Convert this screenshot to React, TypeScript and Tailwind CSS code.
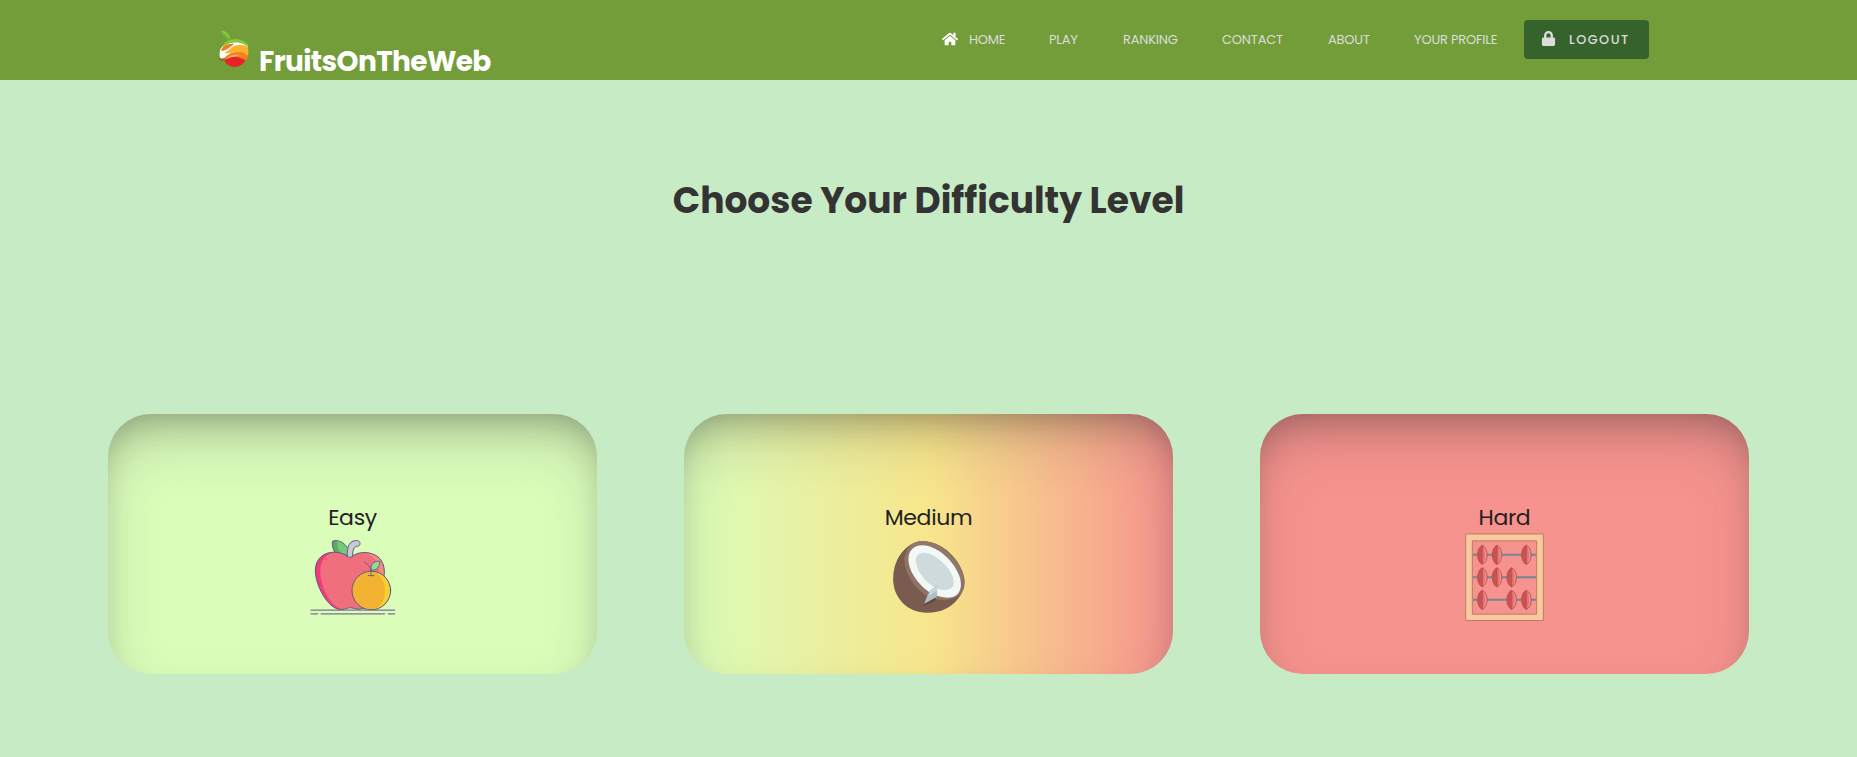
import React from 'react';
import { FaHome, FaLock } from 'react-icons/fa';

const FONT = 'font-[Poppins,Inter,sans-serif]';
const CARD =
  'flex h-[260px] w-[489px] flex-col items-center rounded-[43px] shadow-[inset_0_30px_60px_-12px_rgba(50,50,50,0.25),inset_0_18px_36px_-18px_rgba(0,0,0,0.3)]';

function FruitLogo() {
  return (
    <svg className="mt-[29px] h-10 w-[33px]" viewBox="51 87 99 120">
      <path d="M63 92C77 92 92 102 89 119C75 119 65 108 63 92Z" fill="#65b32e" />
      <path d="M63 92C77 92 92 102 89 119Z" fill="#8cc63f" />
      <path d="M67 139C84 120 128 117 143 134C144 143 142 148 140 151L68 175C59 176 57 170 60 150Z" fill="#fff" />
      <path d="M66 141C73 126 86 118 104 117C123 117 137 125 146 137C142 140 137 137 132 133C112 124 91 127 76 136Z" fill="#8cc63f" />
      <path d="M64 149C70 135 82 131 104 131C91 139 82 151 64 153Z" fill="#f47b20" />
      <path d="M72 160C88 153 96 137 113 136C127 134 138 137 143 140C146 151 146 160 143 168C132 156 112 150 92 160Z" fill="#fdb02b" />
      <path d="M70 178C80 163 97 155 117 156C130 157 140 164 144 171C141 180 137 184 134 186C116 170 95 172 70 178Z" fill="#f58020" />
      <path d="M80 177C88 168 101 163 119 165C108 168 94 173 80 177Z" fill="#fff" opacity=".45" />
      <path d="M73 180C88 175 91 170 104 171C119 170 128 177 137 180C128 194 117 201 103 201C88 200 77 192 73 180Z" fill="#e92228" />
      <path d="M56 174C61 181 67 178 76 178C66 185 58 182 56 174Z" fill="#e92228" />
    </svg>
  );
}

function AppleOrange() {
  return (
    <svg className="size-[90px]" viewBox="53 126.5 270 270" strokeLinecap="round" strokeLinejoin="round">
      <path d="M133 187C127 175 124 162 127 154C145 148 163 160 171 173V197Z" fill="#76c77b" />
      <path d="M133 187C127 175 124 162 127 154C138 151 143 155 142 167C142 175 145 183 150 188Z" fill="#5aac60" />
      <path d="M133 187C127 175 124 162 127 154C145 148 163 160 171 173" fill="none" stroke="#5b5688" strokeWidth="3" />
      <path d="M179 201C191 198 200 188 220 188C260 188 282 211 282 246C282 290 245 357 207 358C195 359 188 353 178 354C169 355 163 360 149 359C112 356 75 286 75 243C75 208 98 187 132 187C154 187 167 197 179 201Z" fill="#ef707c" />
      <path d="M136 187C105 190 90 213 90 244C90 290 120 353 158 359C117 364 75 286 75 243C75 208 98 187 136 187Z" fill="#f23b7a" />
      <path d="M222 188C259 188 282 211 282 246V260H265C273 218 249 196 222 188Z" fill="#f18f7d" />
      <path d="M179 201C191 198 200 188 220 188C260 188 282 211 282 246C282 290 245 357 207 358C195 359 188 353 178 354C169 355 163 360 149 359C112 356 75 286 75 243C75 208 98 187 132 187C154 187 167 197 179 201Z" fill="none" stroke="#5b5688" strokeWidth="3" />
      <path d="M171 200C169 168 178 153 198 152C212 152 212 168 202 169C190 171 187 178 187 200C180 204 174 203 171 200Z" fill="#c9cbd3" stroke="#5b5688" strokeWidth="3" />
      <circle cx="243" cy="302" r="58" fill="#f5d02f" />
      <path d="M243 244C267 247 284 269 284 302C284 335 265 357 243 360A58 58 0 0 1 243 244Z" fill="#f4b233" />
      <circle cx="243" cy="302" r="58" fill="none" stroke="#5b5688" strokeWidth="3" />
      <path d="M243 239C239 225 248 214 268 214C270 229 260 242 243 242Z" fill="#8cdf94" stroke="#5b5688" strokeWidth="2.5" />
      <path d="M222 217C232 222 239 229 242 240V257M234 257Q242 259 251 257" fill="none" stroke="#5b5688" strokeWidth="2.5" />
      <path d="M62 361H313M62 372H82M92 372H283M294 372H313" fill="none" stroke="#77758f" strokeWidth="3.5" />
    </svg>
  );
}

function Coconut() {
  return (
    <svg className="size-[90px]" viewBox="70.5 126.5 270 270">
      <path d="M190 154C162 153 138 168 119 195C104 217 98 242 98 270C99 326 143 370 201 369C240 369 273 353 293 326C307 309 314 291 312 270C309 225 257 156 190 154Z" fill="#795c4f" />
      <path d="M190 154C160 153 136 174 132 202C128 247 166 303 206 321C241 337 281 334 300 312C314 297 313 271 308 253C293 209 241 156 190 154Z" fill="#8f7366" />
      <path d="M190 154C171 153 159 158 149 168C138 181 138 213 148 236C169 284 216 324 254 324C286 323 305 303 303 275C314 258 301 235 288 215C262 179 223 155 190 154Z" fill="#937769" />
      <path d="M186 166C159 166 143 182 144 211C145 247 179 291 211 309C234 323 272 331 290 314C303 302 304 281 297 259C282 215 232 167 186 166Z" fill="#f2f8f6" />
      <path d="M190 189C174 189 165 200 166 215C169 245 196 277 218 290L230 297C247 303 267 301 275 292C282 284 280 269 276 259C263 226 221 190 190 189Z" fill="#cfdadc" />
      <path d="M187 350L202 329L228 317C231 336 206 340 187 350Z" fill="#5e473d" />
      <path d="M191 342C198 325 203 307 213 298C221 294 226 288 231 283C228 301 232 310 228 324C215 326 206 336 191 342Z" fill="#b0bec5" />
      <path d="M213 298C221 294 226 288 231 283L229 302L204 320C207 309 208 303 213 298Z" fill="#c8d5d9" />
    </svg>
  );
}

const BEADS: [number, number][] = [
  [127, 195], [171, 195], [259, 195],
  [127, 262.5], [171, 262.5], [215, 262.5],
  [127, 330], [215, 330], [259, 330],
];

function Abacus() {
  return (
    <svg className="size-[90px]" viewBox="60 126.5 270 270">
      <path fillRule="evenodd" d="M77 132.500H310V392H77ZM97 153H290V373H97Z" fill="#fac9a0" stroke="#b77f61" strokeWidth="3" />
      <path d="M99 195H288M99 262.500H288M99 330H288" stroke="#748593" strokeWidth="6" />
      {BEADS.map(([x, y]) => (
        <g key={`${x}-${y}`} transform={`translate(${x} ${y})`}>
          <path d="M0 -29C19 -20 19 20 0 29C-19 20 -19 -20 0 -29Z" fill="#f29290" />
          <path d="M0 -29C-19 -20 -19 20 0 29Z" fill="#cc5250" />
          <path d="M0 -29C11 -20 11 20 0 29Z" fill="#df7673" />
          <path d="M0 -29C19 -20 19 20 0 29C-19 20 -19 -20 0 -29ZM0 -28V28" fill="none" stroke="#b74b4b" strokeWidth="2.5" />
        </g>
      ))}
    </svg>
  );
}

export default function App() {
  return (
    <div className={`h-[757px] overflow-hidden bg-[#c7ebc5] ${FONT}`}>
      <header className="flex h-20 items-start bg-[#739d39] pl-[217px]">
        <FruitLogo />
        <span className="mt-[42px] ml-[9px] w-[683px] text-[28px] leading-10 font-bold tracking-[-0.64px] whitespace-nowrap text-white">FruitsOnTheWeb</span>
        <nav className="flex h-[79px] items-center text-[13px] tracking-[-0.2px] whitespace-nowrap text-[#dcdcdc]">
          <a className="flex w-[107px] items-center"><FaHome className="mr-[11px] mb-0.5 size-4 text-white" />HOME</a>
          <a className="w-[74px]">PLAY</a>
          <a className="w-[99px]">RANKING</a>
          <a className="w-[106px]">CONTACT</a>
          <a className="w-[86px]">ABOUT</a>
          <a className="w-[110px]">YOUR PROFILE</a>
          <a className="flex h-[39px] w-[125px] items-center rounded bg-[#35632b] pl-[17px] text-[12.8px] font-medium tracking-[1.5px]">
            <FaLock className="mr-[13px] mb-0.5 size-[15px]" />LOGOUT
          </a>
        </nav>
      </header>
      <h1 className="mt-[95px] text-center text-[36px] leading-[52px] font-bold text-[#333]">Choose Your Difficulty Level</h1>
      <main className="mt-[187px] flex justify-center gap-[87px] text-[22px] tracking-[-0.35px] text-[#212121]">
        <section className={`${CARD} bg-[#dafdba]`}>
          <h2 className="mt-[88px] h-[30px] leading-8">Easy</h2>
          <AppleOrange />
        </section>
        <section className={`${CARD} bg-[linear-gradient(90deg,#dafdba_0%,#f7e68c_50%,#f7938e_100%)]`}>
          <h2 className="mt-[88px] h-[30px] leading-8">Medium</h2>
          <Coconut />
        </section>
        <section className={`${CARD} bg-[#f7938e]`}>
          <h2 className="mt-[88px] h-[30px] leading-8">Hard</h2>
          <Abacus />
        </section>
      </main>
    </div>
  );
}
